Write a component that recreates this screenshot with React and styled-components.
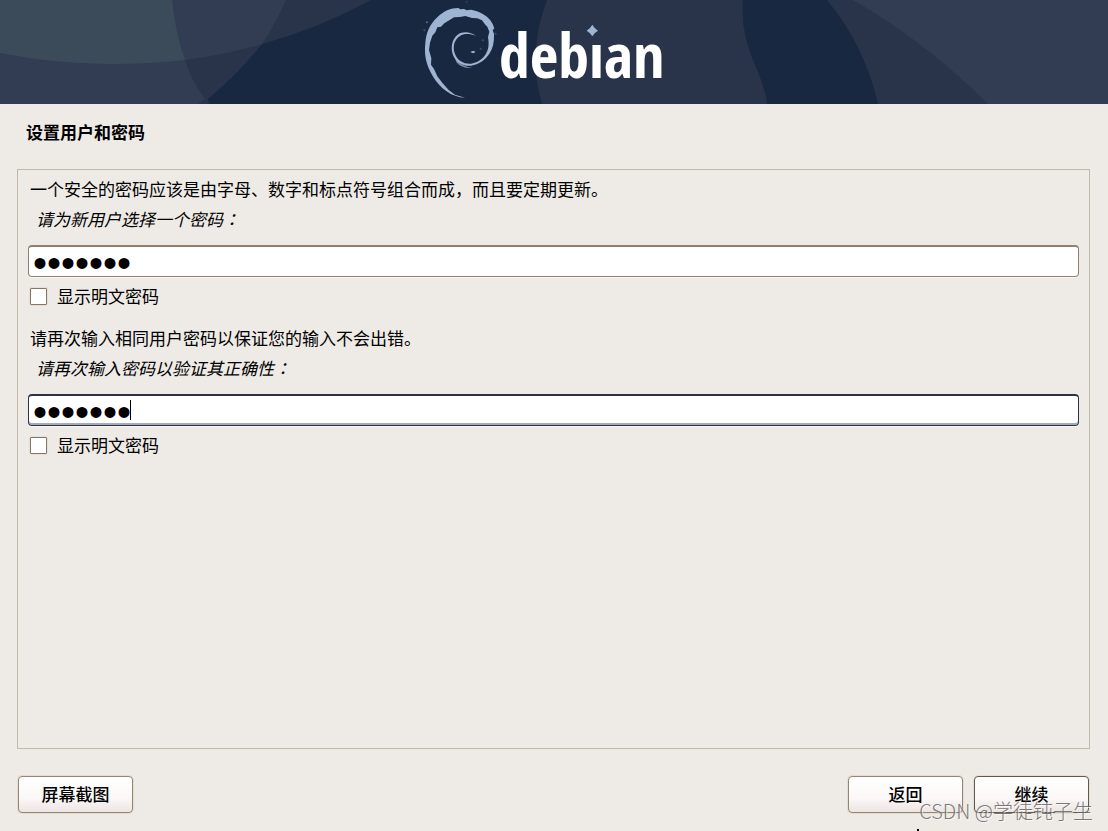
import React, { useState } from "react";
import styled, { createGlobalStyle } from "styled-components";

const GlobalStyle = createGlobalStyle`
  * {
    box-sizing: border-box;
  }

  body {
    margin: 0;
    background: #eeebe6;
    color: #000;
    font-family: "Noto Sans CJK SC", "Noto Sans", sans-serif;
    font-size: 17px;
    line-height: 24px;
  }
`;

const BannerArt = () => (
  <Art viewBox="0 0 1108 104" preserveAspectRatio="none" aria-hidden="true">
    <path fill="#29344b" d="M0 0H371Q320 28 262 44Q239 73 208 99L209 104H0Z" />
    <path
      fill="#323c53"
      d="M0 0H286Q276 23 262 44Q224 55 185 60Q191 80 205 99L198 104H0Z"
    />
    <path
      fill="#3b4b59"
      d="M0 0H172Q175 32 185 60Q150 64 110 64Q55 64 0 53Z"
    />
    <path
      fill="#29344b"
      d="M547 0Q527 52 542 104H767Q766 90 753 60Q740 28 743 0Z"
    />
    <path fill="#29344b" d="M827 0Q865 46 878 104H1108V0Z" />
    <path fill="#323c53" d="M853 0Q926 42 988 104H1108V0Z" />
  </Art>
);

const Logo = () => (
  <LogoSvg viewBox="0 0 288 104" role="img" aria-label="debian">
    <defs>
      {/* hides the round dot of the i, the diamond takes its place */}
      <linearGradient
        id="stem"
        gradientUnits="userSpaceOnUse"
        x1="0"
        y1="0"
        x2="0"
        y2="104"
      >
        <stop offset="0.4" stopColor="#fff" stopOpacity="0" />
        <stop offset="0.4" stopColor="#fff" />
      </linearGradient>
    </defs>
    <g transform="scale(0.3333)" fill="#9eb4d2">
      <path d="M165 293C125 292 90 265 68 228C48 195 42 165 46 130C48 98 60 72 82 52C101 33 122 24 145 24L151 28L162 27L170 31L183 29C208 34 230 45 241 61L248 72L253 85L248 91L252 101C253 125 249 145 239 160C226 181 205 194 184 197C160 200 138 188 129 165C121 142 126 117 143 104C158 93 181 95 198 108C180 101 163 100 150 108C132 119 127 142 135 162C143 183 163 193 184 191C204 188 222 175 230 157C237 145 237 127 234 112L238 95L232 80L226 74L216 61L202 55L186 54L166 48L150 51L132 52L119 60L103 70L93 80L82 82L76 97L67 107L60 128L57 150L64 175L63 194L72 207L82 229L98 250L116 270L135 284Z" />
      <path d="M135 174Q153 199 187 204Q156 207 139 187Z" opacity="0.7" />
      <path d="M181 156L190 152L197 156L189 160Z" />
      <circle cx="212" cy="146" r="3" opacity="0.3" />
      <circle cx="219" cy="121" r="3" opacity="0.3" />
      <circle cx="51" cy="67" r="3" opacity="0.5" />
      <circle cx="43" cy="91" r="3" opacity="0.3" />
      <circle cx="170" cy="5" r="3" opacity="0.2" />
      <circle cx="257" cy="101" r="3" opacity="0.3" />
      <path d="M547 74Q553 85 564 92Q553 98 547 109Q541 98 530 92Q541 85 547 74Z" />
    </g>
    <Wordmark x="89" y="78">
      deb<tspan fill="url(#stem)">i</tspan>an
    </Wordmark>
  </LogoSvg>
);

const PasswordField = ({ id, hint, question, focused }) => {
  const [value, setValue] = useState("debian1");
  const [visible, setVisible] = useState(false);

  return (
    <Field>
      <Hint>{hint}</Hint>
      <Question htmlFor={id}>
        {question}
        <Colon>：</Colon>
      </Question>
      <InputWrap>
        <Input
          id={id}
          type={visible ? "text" : "password"}
          value={value}
          $focused={focused}
          onChange={(e) => setValue(e.target.value)}
        />
        {focused && <Caret />}
      </InputWrap>
      <CheckLabel>
        <Checkbox
          type="checkbox"
          checked={visible}
          onChange={(e) => setVisible(e.target.checked)}
        />
        显示明文密码
      </CheckLabel>
    </Field>
  );
};

const App = () => (
  <Page>
    <GlobalStyle />
    <Banner>
      <BannerArt />
      <Logo />
    </Banner>
    <Title>设置用户和密码</Title>
    <Panel>
      <PasswordField
        id="password"
        hint="一个安全的密码应该是由字母、数字和标点符号组合而成，而且要定期更新。"
        question="请为新用户选择一个密码"
      />
      <PasswordField
        id="password-again"
        hint="请再次输入相同用户密码以保证您的输入不会出错。"
        question="请再次输入密码以验证其正确性"
        focused
      />
    </Panel>
    <Footer>
      <Button type="button">屏幕截图</Button>
      <Spacer />
      <Button type="button">返回</Button>
      <Button type="button" $primary>
        继续
      </Button>
    </Footer>
    <Watermark>CSDN @学徒钝子生</Watermark>
    <Pointer />
  </Page>
);

const Page = styled.div`
  position: relative;
  display: flex;
  flex-direction: column;
  min-height: 100vh;
  overflow: hidden;
`;

const Banner = styled.header`
  position: relative;
  display: flex;
  justify-content: center;
  height: 104px;
  background: #192841;
`;

const Art = styled.svg`
  position: absolute;
  inset: 0;
  width: 100%;
  height: 100%;
`;

const LogoSvg = styled.svg`
  position: relative;
  width: 288px;
  height: 104px;
`;

const Wordmark = styled.text`
  fill: #fff;
  font-family: "Liberation Sans Narrow", "Open Sans Condensed",
    "Roboto Condensed", "DejaVu Sans Condensed", sans-serif;
  font-size: 62px;
  font-weight: 700;
`;

const Title = styled.h1`
  margin: 16px 26px 25px;
  font-size: 17px;
  line-height: 24px;
  font-weight: 700;
`;

const Panel = styled.main`
  flex: 1;
  display: flex;
  flex-direction: column;
  gap: 18px;
  margin: 0 18px 0 17px;
  padding: 7px 10px;
  border: 1px solid #c3b9ab;
`;

const Field = styled.section`
  display: flex;
  flex-direction: column;
`;

const Hint = styled.p`
  margin: 0 2px 6px;
`;

const Question = styled.label`
  margin: 0 8px 14px;
  font-style: italic;
`;

const Colon = styled.span`
  font-family: "Noto Sans CJK TC", sans-serif;
`;

const InputWrap = styled.div`
  position: relative;
  display: flex;
`;

const Input = styled.input`
  width: 100%;
  height: 32px;
  padding: 4px 4px 0;
  border: 1px solid ${(p) => (p.$focused ? "#2d3347" : "#8f8071")};
  border-top-width: 2px;
  border-radius: 4px;
  outline: none;
  background: #fff;
  box-shadow: ${(p) =>
    p.$focused
      ? "inset 0 -2px 0 #a3abbd, 0 1px 0 #f8f5f2"
      : "0 1px 0 #faf6f3"};
  color: #000;
  font-family: "Liberation Sans", Arial, sans-serif;
  font-size: ${(p) => (p.type === "password" ? 40 : 17)}px;
  line-height: 26px;
`;

const Caret = styled.span`
  position: absolute;
  left: 102px;
  top: 6px;
  width: 1px;
  height: 20px;
  background: #000;
`;

const CheckLabel = styled.label`
  display: flex;
  align-items: center;
  gap: 10px;
  margin: 7px 2px 0;
`;

const Checkbox = styled.input`
  appearance: none;
  width: 17px;
  height: 17px;
  margin: 0;
  border: 1px solid #85766a;
  border-radius: 1px;
  background: #fff;
  box-shadow: 0 0 0 1px #e6dfd7;

  &:checked {
    background: #85766a;
  }
`;

const Footer = styled.footer`
  display: flex;
  gap: 11px;
  padding: 27px 19px 18px 18px;
`;

const Spacer = styled.div`
  flex: 1;
`;

const Button = styled.button`
  width: 115px;
  height: 37px;
  padding: 0 0 2px;
  border: 1px solid ${(p) => (p.$primary ? "#62594f" : "#93876f")};
  border-radius: 4px;
  background: linear-gradient(#fff, #fbf8f7 60%, #ece4e2);
  box-shadow: 0 0 0 1px #e6ddd2;
  color: #000;
  font-family: inherit;
  font-size: 17px;
  font-weight: 500;
  line-height: 24px;
`;

const Watermark = styled.div`
  position: absolute;
  right: 15px;
  bottom: 8px;
  color: rgba(100, 100, 100, 0.85);
  font-size: 20px;
  font-weight: 300;
  line-height: 24px;
  text-shadow: 1px 1px 0 rgba(255, 255, 255, 0.6);
  pointer-events: none;
`;

const Pointer = styled.span`
  position: absolute;
  left: 917px;
  bottom: 0;
  width: 2px;
  height: 2px;
  background: #000;
`;

export default App;
